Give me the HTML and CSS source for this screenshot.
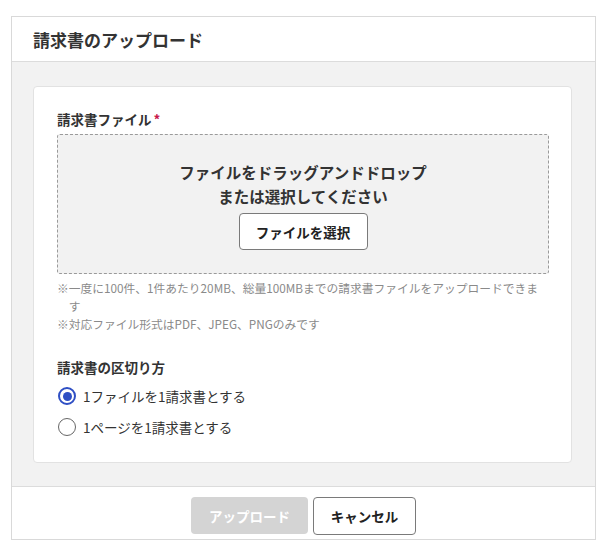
FILE: index.html
```html
<!DOCTYPE html>
<html lang="ja">
<head>
<meta charset="utf-8">
<title>請求書のアップロード</title>
<link rel="stylesheet" href="styles.css">
</head>
<body>
<div class="modal">
  <div class="modal-header">
    <h1 class="modal-title">請求書のアップロード</h1>
  </div>
  <div class="modal-body">
    <div class="card">
      <div class="field-label">請求書ファイル<span class="required">*</span></div>
      <div class="dropzone">
        <div class="drop-text">ファイルをドラッグアンドドロップ<br>または選択してください</div>
        <button class="btn btn-outline btn-select" type="button">ファイルを選択</button>
      </div>
      <div class="notes">
        <p class="note">※一度に100件、1件あたり20MB、総量100MBまでの請求書ファイルをアップロードできます</p>
        <p class="note">※対応ファイル形式はPDF、JPEG、PNGのみです</p>
      </div>
      <div class="section-label">請求書の区切り方</div>
      <div class="radio-group">
        <label class="radio-row">
          <span class="radio radio-checked"></span>
          <span class="radio-text">1ファイルを1請求書とする</span>
        </label>
        <label class="radio-row">
          <span class="radio"></span>
          <span class="radio-text">1ページを1請求書とする</span>
        </label>
      </div>
    </div>
  </div>
  <div class="modal-footer">
    <button class="btn btn-disabled" type="button">アップロード</button>
    <button class="btn btn-outline btn-cancel" type="button">キャンセル</button>
  </div>
</div>
</body>
</html>
```

FILE: styles.css
```css
* {
  box-sizing: border-box;
}

body {
  margin: 0;
  background: #ffffff;
  font-family: "Noto Sans CJK JP", "Noto Sans", sans-serif;
  color: #333333;
}

.modal {
  margin: 16px 0 0 11px;
  width: 585px;
  border: 1px solid #d9d9d9;
  background: #ffffff;
}

.modal-header {
  height: 45px;
  padding: 2px 21px 0;
  display: flex;
  align-items: center;
  border-bottom: 1px solid #dcdcdc;
}

.modal-title {
  margin: 0;
  font-size: 17px;
  font-weight: 700;
  color: #333333;
  line-height: 24px;
}

.modal-body {
  background: #f2f2f2;
  padding: 24px 23px 23px 21px;
}

.card {
  background: #ffffff;
  border: 1px solid #e2e2e2;
  border-radius: 4px;
  padding: 22px 22px 22px 23px;
}

.field-label {
  font-size: 13.5px;
  font-weight: 700;
  line-height: 20px;
  color: #333333;
}

.required {
  color: #c8174b;
  margin-left: 2px;
}

.dropzone {
  margin-top: 5px;
  height: 140px;
  border: 1px dashed #9a9a9a;
  border-radius: 3px;
  background: #f2f2f2;
  padding-top: 25px;
  display: flex;
  flex-direction: column;
  align-items: center;
}

.drop-text {
  text-align: center;
  font-size: 15.5px;
  font-weight: 700;
  line-height: 24px;
  color: #333333;
}

.btn {
  font-family: "Noto Sans CJK JP", "Noto Sans", sans-serif;
  font-size: 13.5px;
  font-weight: 700;
  border-radius: 4px;
  height: 37px;
  padding: 0;
  cursor: pointer;
}

.btn-outline {
  background: #ffffff;
  border: 1px solid #7a7a7a;
  color: #222222;
}

.btn-select {
  margin-top: 5px;
  width: 129px;
}

.notes {
  margin-top: 5px;
}

.note {
  margin: 0;
  font-size: 11.75px;
  line-height: 18px;
  color: #8a8a8a;
  padding-left: 1em;
  padding-right: 8px;
  text-indent: -1em;
}

.section-label {
  margin-top: 24px;
  font-size: 13.5px;
  font-weight: 700;
  line-height: 20px;
  color: #333333;
}

.radio-group {
  margin-top: 6px;
  display: flex;
  flex-direction: column;
  gap: 5px;
}

.radio-row {
  display: flex;
  align-items: center;
  height: 26px;
  gap: 7px;
  padding-left: 1px;
}

.radio {
  width: 18px;
  height: 18px;
  border-radius: 50%;
  border: 1.5px solid #666666;
  background: #ffffff;
  display: flex;
  align-items: center;
  justify-content: center;
}

.radio-checked {
  border: 2px solid #2f4fc4;
}

.radio-checked::after {
  content: "";
  width: 9px;
  height: 9px;
  border-radius: 50%;
  background: #2f4fc4;
}

.radio-text {
  font-size: 13.5px;
  line-height: 20px;
  color: #333333;
}

.modal-footer {
  border-top: 1px solid #dcdcdc;
  padding: 10px 0 4px;
  display: flex;
  justify-content: center;
  gap: 5px;
}

.btn-disabled {
  width: 117px;
  background: #d4d4d4;
  border: none;
  color: #ffffff;
}

.btn-cancel {
  width: 103px;
  height: 38px;
}
```
